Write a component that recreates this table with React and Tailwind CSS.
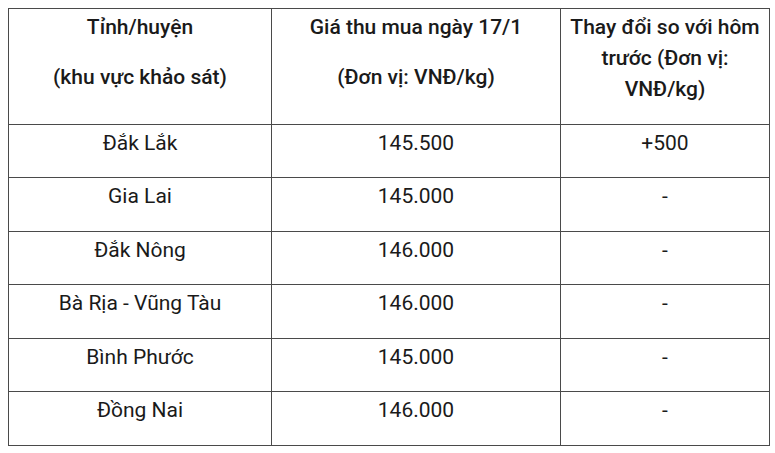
const rows = [
  { name: 'Đắk Lắk', price: '145.500', change: '+500' },
  { name: 'Gia Lai', price: '145.000', change: '-' },
  { name: 'Đắk Nông', price: '146.000', change: '-' },
  { name: 'Bà Rịa - Vũng Tàu', price: '146.000', change: '-' },
  { name: 'Bình Phước', price: '145.000', change: '-' },
  { name: 'Đồng Nai', price: '146.000', change: '-' },
];

function Cell({ children, head }) {
  return (
    <td className={`border border-[#4a4a4a] px-2 pt-[3px] align-top text-center ${head ? 'font-medium' : 'font-normal'}`}>
      {children}
    </td>
  );
}

function P({ children }) {
  return <p className="mb-[18.5px] leading-[31px]">{children}</p>;
}

export default function App() {
  return (
    <div className="min-h-screen bg-white pl-[8px] pt-[8px] font-['Roboto',sans-serif] text-[21px] text-[#1a1a1a]">
      <table className="w-[761px] border-collapse table-fixed">
        <colgroup>
          <col className="w-[263px]" />
          <col className="w-[289px]" />
          <col className="w-[209px]" />
        </colgroup>
        <thead>
          <tr>
            <Cell head>
              <P>Tỉnh/huyện</P>
              <P>(khu vực khảo sát)</P>
            </Cell>
            <Cell head>
              <P>Giá thu mua ngày 17/1</P>
              <P>(Đơn vị: VNĐ/kg)</P>
            </Cell>
            <Cell head>
              <P>Thay đổi so với hôm trước (Đơn vị: VNĐ/kg)</P>
            </Cell>
          </tr>
        </thead>
        <tbody>
          {rows.map((r) => (
            <tr key={r.name}>
              <Cell><P>{r.name}</P></Cell>
              <Cell><P>{r.price}</P></Cell>
              <Cell><P>{r.change}</P></Cell>
            </tr>
          ))}
        </tbody>
      </table>
    </div>
  );
}
